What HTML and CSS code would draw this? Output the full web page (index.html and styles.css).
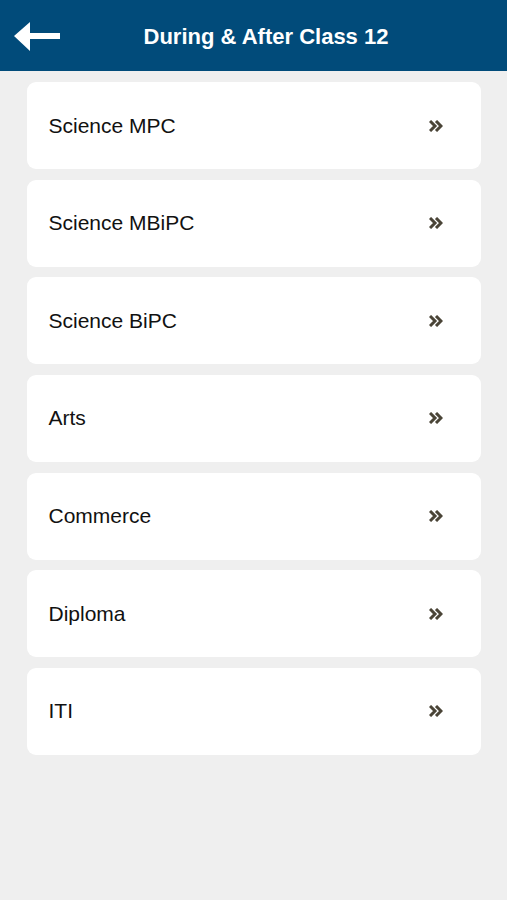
FILE: index.html
```html
<!DOCTYPE html>
<html lang="en">
<head>
    <meta charset="UTF-8">
    <meta name="viewport" content="width=device-width, initial-scale=1.0">
    <title>During &amp; After Class 12</title>
    <link rel="stylesheet" href="styles.css">
</head>
<body>
    <div class="header">
        <a class="back" href="#">
            <svg width="48" height="32" viewBox="0 0 48 32">
                <path d="M1 15 L17 1 L17 12 L47 12 L47 18 L17 18 L17 30 Z" fill="#fff"/>
            </svg>
        </a>
        <h1>During &amp; After Class 12</h1>
    </div>

    <div class="list">
        <a class="item" href="#"><span>Science MPC</span><svg class="chev" width="14" height="12" viewBox="0 0 14 12"><path d="M1 1 L6 6 L1 11 M7 1 L12 6 L7 11" fill="none" stroke="#4a4437" stroke-width="3"/></svg></a>
        <a class="item" href="#"><span>Science MBiPC</span><svg class="chev" width="14" height="12" viewBox="0 0 14 12"><path d="M1 1 L6 6 L1 11 M7 1 L12 6 L7 11" fill="none" stroke="#4a4437" stroke-width="3"/></svg></a>
        <a class="item" href="#"><span>Science BiPC</span><svg class="chev" width="14" height="12" viewBox="0 0 14 12"><path d="M1 1 L6 6 L1 11 M7 1 L12 6 L7 11" fill="none" stroke="#4a4437" stroke-width="3"/></svg></a>
        <a class="item" href="#"><span>Arts</span><svg class="chev" width="14" height="12" viewBox="0 0 14 12"><path d="M1 1 L6 6 L1 11 M7 1 L12 6 L7 11" fill="none" stroke="#4a4437" stroke-width="3"/></svg></a>
        <a class="item" href="#"><span>Commerce</span><svg class="chev" width="14" height="12" viewBox="0 0 14 12"><path d="M1 1 L6 6 L1 11 M7 1 L12 6 L7 11" fill="none" stroke="#4a4437" stroke-width="3"/></svg></a>
        <a class="item" href="#"><span>Diploma</span><svg class="chev" width="14" height="12" viewBox="0 0 14 12"><path d="M1 1 L6 6 L1 11 M7 1 L12 6 L7 11" fill="none" stroke="#4a4437" stroke-width="3"/></svg></a>
        <a class="item" href="#"><span>ITI</span><svg class="chev" width="14" height="12" viewBox="0 0 14 12"><path d="M1 1 L6 6 L1 11 M7 1 L12 6 L7 11" fill="none" stroke="#4a4437" stroke-width="3"/></svg></a>
    </div>
</body>
</html>
```

FILE: styles.css
```css
body {
    margin: 0;
    min-height: 100vh;
    background: #efefef;
    font-family: 'Liberation Sans', Arial, sans-serif;
}
.header {
    position: relative;
    height: 71px;
    background: #014b7a;
    display: flex;
    align-items: center;
    justify-content: center;
    padding-left: 25px;
}
.header h1 {
    margin: 3px 0 0;
    color: #fff;
    font-size: 22px;
    font-weight: bold;
}
.back {
    position: absolute;
    left: 13px;
    top: 21px;
    display: block;
    line-height: 0;
}
.list {
    display: flex;
    flex-direction: column;
    gap: 10.67px;
    padding: 11px 26px 0 26.5px;
}
.item {
    height: 87px;
    background: #fff;
    border-radius: 9px;
    display: flex;
    align-items: center;
    justify-content: space-between;
    padding: 0 38px 0 22px;
    color: #111;
    font-size: 21px;
    text-decoration: none;
}
.chev {
    display: block;
}
```
